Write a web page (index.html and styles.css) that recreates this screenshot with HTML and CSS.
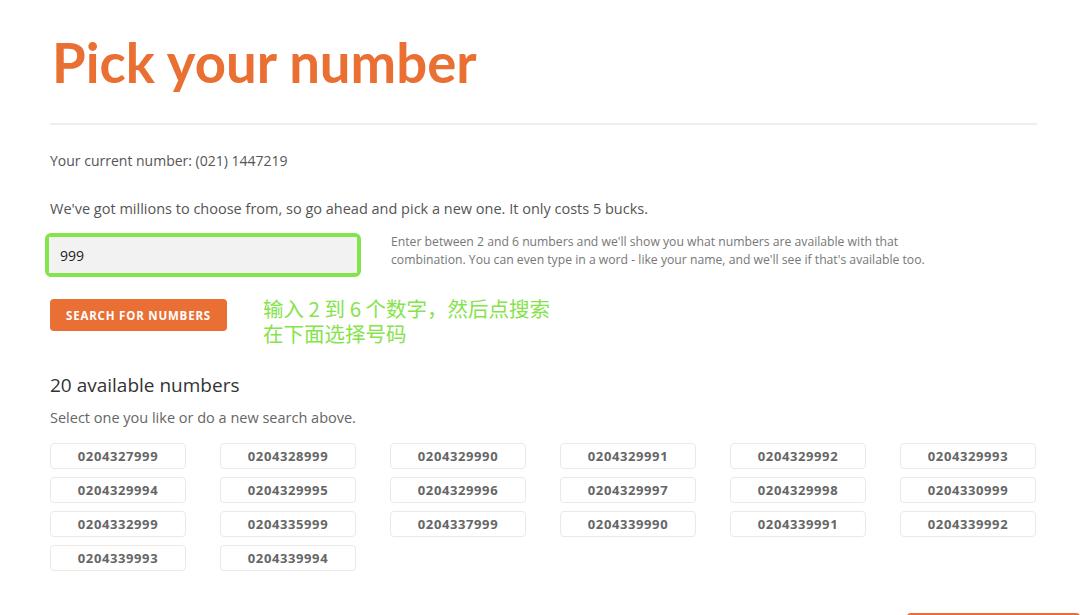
FILE: index.html
```html
<!DOCTYPE html>
<html lang="en">
<head>
    <meta charset="UTF-8">
    <meta name="viewport" content="width=device-width, initial-scale=1.0">
    <title>Pick your number</title>
    <link rel="stylesheet" href="styles.css">
</head>
<body>
    <main class="page">
        <h1 class="title">Pick your number</h1>
        <hr class="divider">

        <p class="current">Your current number: (021) 1447219</p>
        <p class="intro">We've got millions to choose from, so go ahead and pick a new one. It only costs 5 bucks.</p>

        <div class="search-row">
            <div class="search-box">
                <input type="text" class="search-input" value="999">
            </div>
            <p class="hint">Enter between 2 and 6 numbers and we'll show you what numbers are available with that combination. You can even type in a word - like your name, and we'll see if that's available too.</p>
        </div>

        <div class="action-row">
            <button class="search-btn">SEARCH FOR NUMBERS</button>
            <p class="note">输入 2 到 6 个数字，然后点搜索<br>在下面选择号码</p>
        </div>

        <h2 class="results-title">20 available numbers</h2>
        <p class="results-sub">Select one you like or do a new search above.</p>

        <div class="numbers">
            <button class="number">0204327999</button>
            <button class="number">0204328999</button>
            <button class="number">0204329990</button>
            <button class="number">0204329991</button>
            <button class="number">0204329992</button>
            <button class="number">0204329993</button>
            <button class="number">0204329994</button>
            <button class="number">0204329995</button>
            <button class="number">0204329996</button>
            <button class="number">0204329997</button>
            <button class="number">0204329998</button>
            <button class="number">0204330999</button>
            <button class="number">0204332999</button>
            <button class="number">0204335999</button>
            <button class="number">0204337999</button>
            <button class="number">0204339990</button>
            <button class="number">0204339991</button>
            <button class="number">0204339992</button>
            <button class="number">0204339993</button>
            <button class="number">0204339994</button>
        </div>

        <div class="footer-row">
            <button class="next-btn" aria-label="Continue"></button>
        </div>
    </main>
</body>
</html>
```

FILE: styles.css
```css
body {
    font-family: "Open Sans", "Noto Sans", sans-serif;
    margin: 0;
    padding: 0;
    background-color: #fff;
    color: #555;
}

.page {
    width: 987px;
    padding: 30px 0 0 50px;
}

.title {
    font-family: Lato, sans-serif;
    font-size: 54.5px;
    font-weight: 700;
    color: #ea6f33;
    margin: 0 0 0 2px;
    line-height: 64px;
    letter-spacing: 0;
}

.divider {
    border: none;
    border-top: 2px solid #eeeeee;
    margin: 29px 0 0;
}

.current {
    font-size: 14px;
    margin: 26px 0 0;
}

.intro {
    font-size: 14.5px;
    margin: 29px 0 0;
}

.search-row {
    display: flex;
    align-items: flex-start;
    margin-top: 15px;
    margin-left: -5px;
}

.search-box {
    width: 308px;
    height: 36px;
    border: 4px solid #85e34b;
    border-radius: 6px;
    flex-shrink: 0;
}

.search-input {
    width: 100%;
    height: 100%;
    box-sizing: border-box;
    border: none;
    background: #f2f2f2;
    padding: 0 11px;
    font-family: "Open Sans", sans-serif;
    font-size: 14px;
    color: #222;
    outline: none;
}

.hint {
    font-size: 12.2px;
    line-height: 18px;
    color: #777;
    margin: 0 0 0 30px;
    width: 560px;
}

.action-row {
    display: flex;
    align-items: flex-start;
    margin-top: 22px;
}

.search-btn {
    background-color: #ea6f35;
    color: #fff;
    border: none;
    border-radius: 4px;
    width: 177px;
    height: 32px;
    font-family: "Open Sans", sans-serif;
    font-weight: 700;
    font-size: 11.5px;
    letter-spacing: 0.8px;
    cursor: pointer;
}

.note {
    font-family: "Noto Sans CJK SC", sans-serif;
    font-size: 20.5px;
    line-height: 25px;
    color: #85e34b;
    margin: -3px 0 0 36px;
}

.results-title {
    font-size: 19px;
    font-weight: 400;
    color: #333;
    margin: 26px 0 0;
}

.results-sub {
    font-size: 14.5px;
    color: #666;
    margin: 10px 0 0;
}

.numbers {
    display: grid;
    grid-template-columns: repeat(6, 136px);
    column-gap: 34px;
    row-gap: 8px;
    margin-top: 16px;
}

.number {
    height: 26px;
    background: #fff;
    border: 1px solid #efe8e2;
    border-radius: 4px;
    font-family: "Open Sans", sans-serif;
    font-weight: 700;
    font-size: 13px;
    color: #666;
    letter-spacing: 0.6px;
    cursor: pointer;
}

.footer-row {
    display: flex;
    justify-content: flex-end;
    margin-top: 42px;
    margin-right: -43px;
}

.next-btn {
    background-color: #ea6f35;
    border: none;
    border-radius: 4px;
    width: 173px;
    height: 32px;
}
```
